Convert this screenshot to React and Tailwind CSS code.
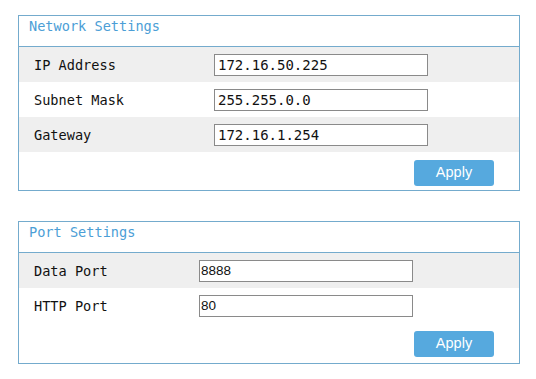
const mono = { fontFamily: '"DejaVu Sans Mono", "Liberation Mono", monospace' };

function Panel({ title, children }) {
  return (
    <div className="border border-[#74abcd] bg-white">
      <div
        className="h-[31px] border-b border-[#74abcd] pl-[10px] pt-[2px] text-[13.6px] leading-[16px] text-[#4b9ed6]"
        style={mono}
      >
        {title}
      </div>
      {children}
    </div>
  );
}

function Row({ label, value, gray, labelWidth, inputFont }) {
  return (
    <div className={`flex h-[35px] items-center pl-[15px] ${gray ? 'bg-[#efefef]' : 'bg-white'}`}>
      <div
        className={`${labelWidth} shrink-0 pt-[1px] text-[13.6px] text-[#111]`}
        style={mono}
      >
        {label}
      </div>
      <input
        readOnly
        value={value}
        className={`h-[22px] w-[214px] border border-[#8a8a8a] bg-white text-[#111] outline-none ${inputFont}`}
      />
    </div>
  );
}

function ApplyButton({ pad }) {
  return (
    <div className={`flex justify-end pr-[25px] ${pad}`}>
      <button className="h-[26px] w-[80px] rounded-[3px] bg-[#56a9de] font-['Liberation_Sans',Arial,sans-serif] text-[14.5px] text-white">
        Apply
      </button>
    </div>
  );
}

export default function App() {
  return (
    <div className="min-h-[379px] w-[536px] bg-white pl-[18px] pt-[15px]">
      <div className="w-[502px]">
        <Panel title="Network Settings">
          <Row label="IP Address" value="172.16.50.225" gray labelWidth="w-[180px]" inputFont="px-[3px] font-['DejaVu_Sans_Mono',monospace] text-[14px]" />
          <Row label="Subnet Mask" value="255.255.0.0" labelWidth="w-[180px]" inputFont="px-[3px] font-['DejaVu_Sans_Mono',monospace] text-[14px]" />
          <Row label="Gateway" value="172.16.1.254" gray labelWidth="w-[180px]" inputFont="px-[3px] font-['DejaVu_Sans_Mono',monospace] text-[14px]" />
          <ApplyButton pad="pt-[8px] pb-[4px]" />
        </Panel>

        <div className="mt-[30px]">
          <Panel title="Port Settings">
            <Row label="Data Port" value="8888" gray labelWidth="w-[165px]" inputFont="px-[1px] font-['Liberation_Sans',Arial,sans-serif] text-[13.5px]" />
            <Row label="HTTP Port" value="80" labelWidth="w-[165px]" inputFont="px-[1px] font-['Liberation_Sans',Arial,sans-serif] text-[13.5px]" />
            <ApplyButton pad="pt-[8px] pb-[6px]" />
          </Panel>
        </div>
      </div>
    </div>
  );
}
